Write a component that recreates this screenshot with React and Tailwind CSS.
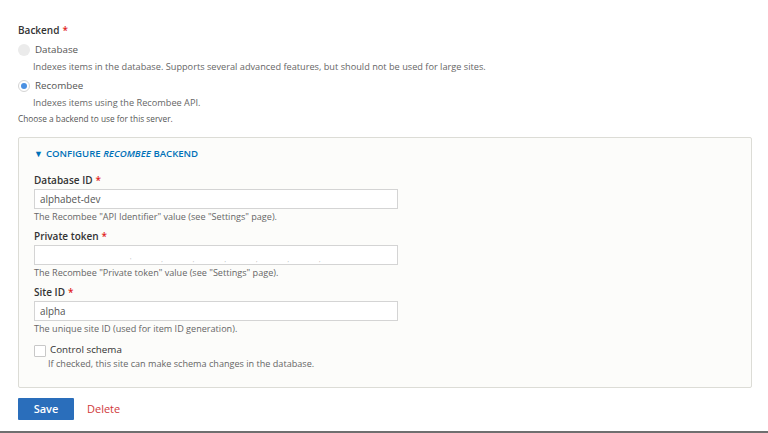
import { useState } from "react";

const font = { fontFamily: '"Open Sans", "Noto Sans", sans-serif' };

function Required() {
  return <span className="ml-[3px] text-[#e11d1d]">*</span>;
}

function Radio({ checked, label, description, onChange }) {
  return (
    <div className="mt-[4px]">
      <label className="flex items-center gap-[5px] h-[16px] cursor-pointer" onClick={onChange}>
        <span
          className={`w-[12px] h-[12px] rounded-full flex items-center justify-center ${
            checked ? "bg-white border border-[#d4d4d4]" : "bg-[#ebebeb]"
          }`}
        >
          {checked && <span className="w-[6px] h-[6px] rounded-full bg-[#4a90e2]" />}
        </span>
        <span className="text-[9.8px] text-[#555]">{label}</span>
      </label>
      <p className="ml-[15px] mt-[2px] text-[9.2px] leading-[14px] text-[#666]">{description}</p>
    </div>
  );
}

function TextField({ label, value, description, children }) {
  return (
    <div className="mb-[5px]">
      <div className="text-[10px] font-semibold text-[#333] leading-[16px]">
        {label}
        <Required />
      </div>
      <div className="mt-[1px] w-[364px] h-[20px] border border-[#d4d4d4] bg-white px-[5px] flex items-center text-[9.9px] text-[#555]">
        {value}
        {children}
      </div>
      <p className="mt-[2px] text-[9.1px] leading-[12px] text-[#666]">{description}</p>
    </div>
  );
}

export default function App() {
  const [backend, setBackend] = useState("recombee");
  const [schema, setSchema] = useState(false);

  return (
    <div className="w-[768px] h-[433px] bg-white flex flex-col overflow-hidden" style={font}>
      <div className="flex-1 px-[18px] pt-[22px]">
        {/* Backend choice */}
        <div className="text-[10px] font-semibold text-[#333] leading-[16px]">
          Backend
          <Required />
        </div>
        <Radio
          checked={backend === "database"}
          label="Database"
          description="Indexes items in the database. Supports several advanced features, but should not be used for large sites."
          onChange={() => setBackend("database")}
        />
        <Radio
          checked={backend === "recombee"}
          label="Recombee"
          description="Indexes items using the Recombee API."
          onChange={() => setBackend("recombee")}
        />
        <p className="mt-[3px] text-[8.3px] leading-[12px] text-[#555]">Choose a backend to use for this server.</p>

        {/* Recombee settings */}
        <div className="mt-[12px] w-[734px] border border-[#dcdcd6] rounded-[2px] bg-[#fcfcfa] px-[15px] pt-[9px] pb-[17px]">
          <div className="flex items-center gap-[3px] text-[9.6px] font-semibold text-[#0071b8]">
            <span className="text-[9px]">▼</span>
            <span>
              CONFIGURE <em>RECOMBEE</em> BACKEND
            </span>
          </div>

          <div className="mt-[11px]">
            <TextField
              label="Database ID"
              value="alphabet-dev"
              description='The Recombee "API Identifier" value (see "Settings" page).'
            />
            <TextField
              label="Private token"
              description='The Recombee "Private token" value (see "Settings" page).'
            >
              <span className="self-end mb-[1px] ml-[90px] text-[6px] leading-[6px] text-[#aaa] tracking-[30px]">
                ',,,,,,
              </span>
            </TextField>
            <TextField
              label="Site ID"
              value="alpha"
              description="The unique site ID (used for item ID generation)."
            />
          </div>

          <label className="mt-[8px] flex items-center gap-[4px] cursor-pointer" onClick={() => setSchema(!schema)}>
            <span className="w-[12px] h-[12px] border border-[#c8c8c8] rounded-[1px] bg-white flex items-center justify-center text-[9px] text-[#333]">
              {schema ? "✓" : ""}
            </span>
            <span className="text-[9.8px] text-[#333]">Control schema</span>
          </label>
          <p className="ml-[14px] mt-[0px] text-[9.1px] leading-[12px] text-[#666]">
            If checked, this site can make schema changes in the database.
          </p>
        </div>

        {/* Actions */}
        <div className="mt-[10px] flex items-center gap-[13px]">
          <button className="w-[56px] h-[22px] bg-[#2a6ebb] rounded-[1px] text-white text-[11px] font-semibold">
            Save
          </button>
          <a className="text-[11px] text-[#d0393a]">Delete</a>
        </div>
      </div>
      <div className="h-[2px] bg-[#6f6f6f]" />
    </div>
  );
}
